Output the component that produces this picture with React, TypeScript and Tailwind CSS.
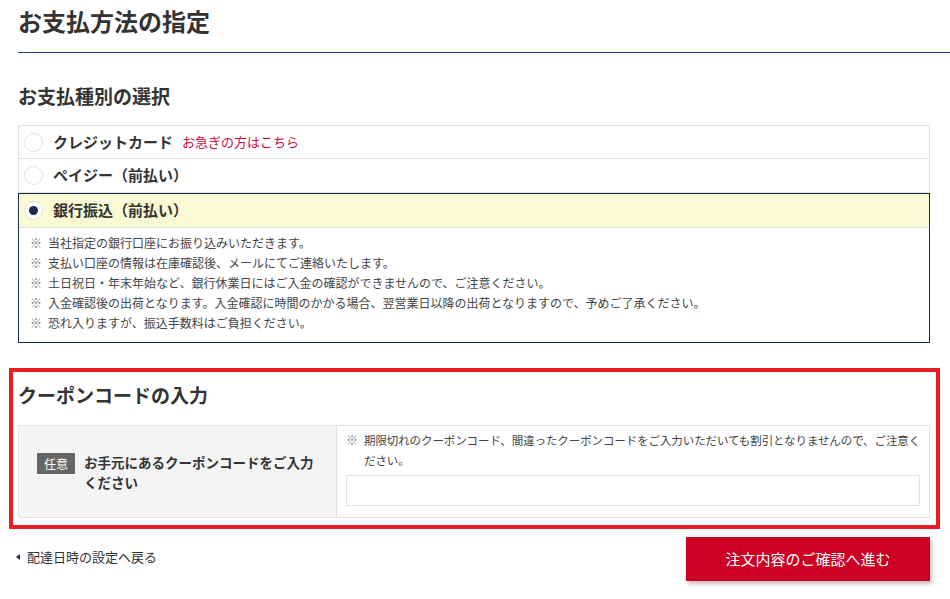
import React from "react";

const notes = [
  "当社指定の銀行口座にお振り込みいただきます。",
  "支払い口座の情報は在庫確認後、メールにてご連絡いたします。",
  "土日祝日・年末年始など、銀行休業日にはご入金の確認ができませんので、ご注意ください。",
  "入金確認後の出荷となります。入金確認に時間のかかる場合、翌営業日以降の出荷となりますので、予めご了承ください。",
  "恐れ入りますが、振込手数料はご負担ください。",
];

const Radio = ({ checked }: { checked?: boolean }) => (
  <span className="w-[19px] h-[19px] rounded-full border border-[#e2e2e2] bg-white flex items-center justify-center shrink-0">
    {checked && <span className="w-[9px] h-[9px] rounded-full bg-[#1c2d4f]" />}
  </span>
);

const App: React.FC = () => {
  return (
    <div
      className="w-[950px] h-[599px] overflow-hidden bg-white text-[#333]"
      style={{ fontFamily: '"Noto Sans CJK JP", "Noto Sans", sans-serif' }}
    >
      <div className="ml-[18px] pt-[3px] border-b border-[#1e3c8c] h-[53px]">
        <h1 className="text-[24px] leading-[36px] font-bold">お支払方法の指定</h1>
      </div>

      <div className="mx-[18px] w-[912px]">
        <h2 className="mt-[28px] text-[19px] leading-[30px] font-bold">お支払種別の選択</h2>
        <div className="mt-[14px]">
          <div className="h-[34px] border border-[#e2e2e2] flex items-center pl-[5px] gap-[10px]">
            <Radio />
            <span className="text-[15px] font-bold">クレジットカード</span>
            <span className="text-[13px] text-[#cf0a45] -ml-[1px]">お急ぎの方はこちら</span>
          </div>
          <div className="h-[34px] border-x border-b border-[#e2e2e2] flex items-center pl-[5px] gap-[10px]">
            <Radio />
            <span className="text-[15px] font-bold">ペイジー（前払い）</span>
          </div>
          <div className="border border-[#1c2d4f]">
            <div className="h-[34px] bg-[#f9f9d3] border-b border-[#e2e2e2] flex items-center pl-[5px] gap-[10px]">
              <Radio checked />
              <span className="text-[15px] font-bold">銀行振込（前払い）</span>
            </div>
            <ul className="pt-[5px] pb-[9px] pl-[11px] text-[12px] leading-[20px] text-[#444]">
              {notes.map((n) => (
                <li key={n} className="flex gap-[6px]">
                  <span className="text-[#777]">※</span>
                  <span>{n}</span>
                </li>
              ))}
            </ul>
          </div>
        </div>
      </div>

      <div className="mt-[25px] ml-[9px] w-[931px] border-4 border-[#ea1c24] px-[5px] pt-[8px] pb-[7px]">
        <h2 className="text-[19px] leading-[30px] font-bold">クーポンコードの入力</h2>
        <div className="mt-[15px] w-[912px] border border-[#e2e2e2] flex">
          <div className="w-[318px] bg-[#f4f4f4] border-r border-[#e2e2e2] flex items-center pl-[18px] gap-[9px]">
            <span className="bg-[#666] text-white text-[12px] leading-[21px] px-[7px] shrink-0 -mt-[16px]">任意</span>
            <span className="text-[13.5px] leading-[20px] font-bold w-[232px]">
              お手元にあるクーポンコードをご入力ください
            </span>
          </div>
          <div className="flex-1 pl-[9px] pr-[5px] pt-[4px] pb-[11px]">
            <p className="flex gap-[6px] text-[12px] leading-[20px] text-[#444]">
              <span className="text-[#777]">※</span>
              <span className="text-[11.5px] tracking-[-0.1px]">
                期限切れのクーポンコード、間違ったクーポンコードをご入力いただいても割引となりませんので、ご注意ください。
              </span>
            </p>
            <input
              type="text"
              className="mt-[5px] block w-[574px] h-[31px] border border-[#e2e2e2] outline-none px-2 text-[14px]"
            />
          </div>
        </div>
      </div>

      <div className="mt-[8px] w-[930px] flex items-start justify-between">
        <a className="mt-[10px] ml-[16px] flex items-center gap-[7px] text-[13px] leading-[20px] text-[#333]">
          <span className="w-0 h-0 border-y-[3px] border-y-transparent border-r-[4px] border-r-[#1c2d4f]" />
          配達日時の設定へ戻る
        </a>
        <button className="w-[244px] h-[44px] bg-[#cc0022] text-white text-[15px] shadow-[2px_3px_4px_rgba(0,0,0,0.25)]">
          注文内容のご確認へ進む
        </button>
      </div>
    </div>
  );
};

export default App;
